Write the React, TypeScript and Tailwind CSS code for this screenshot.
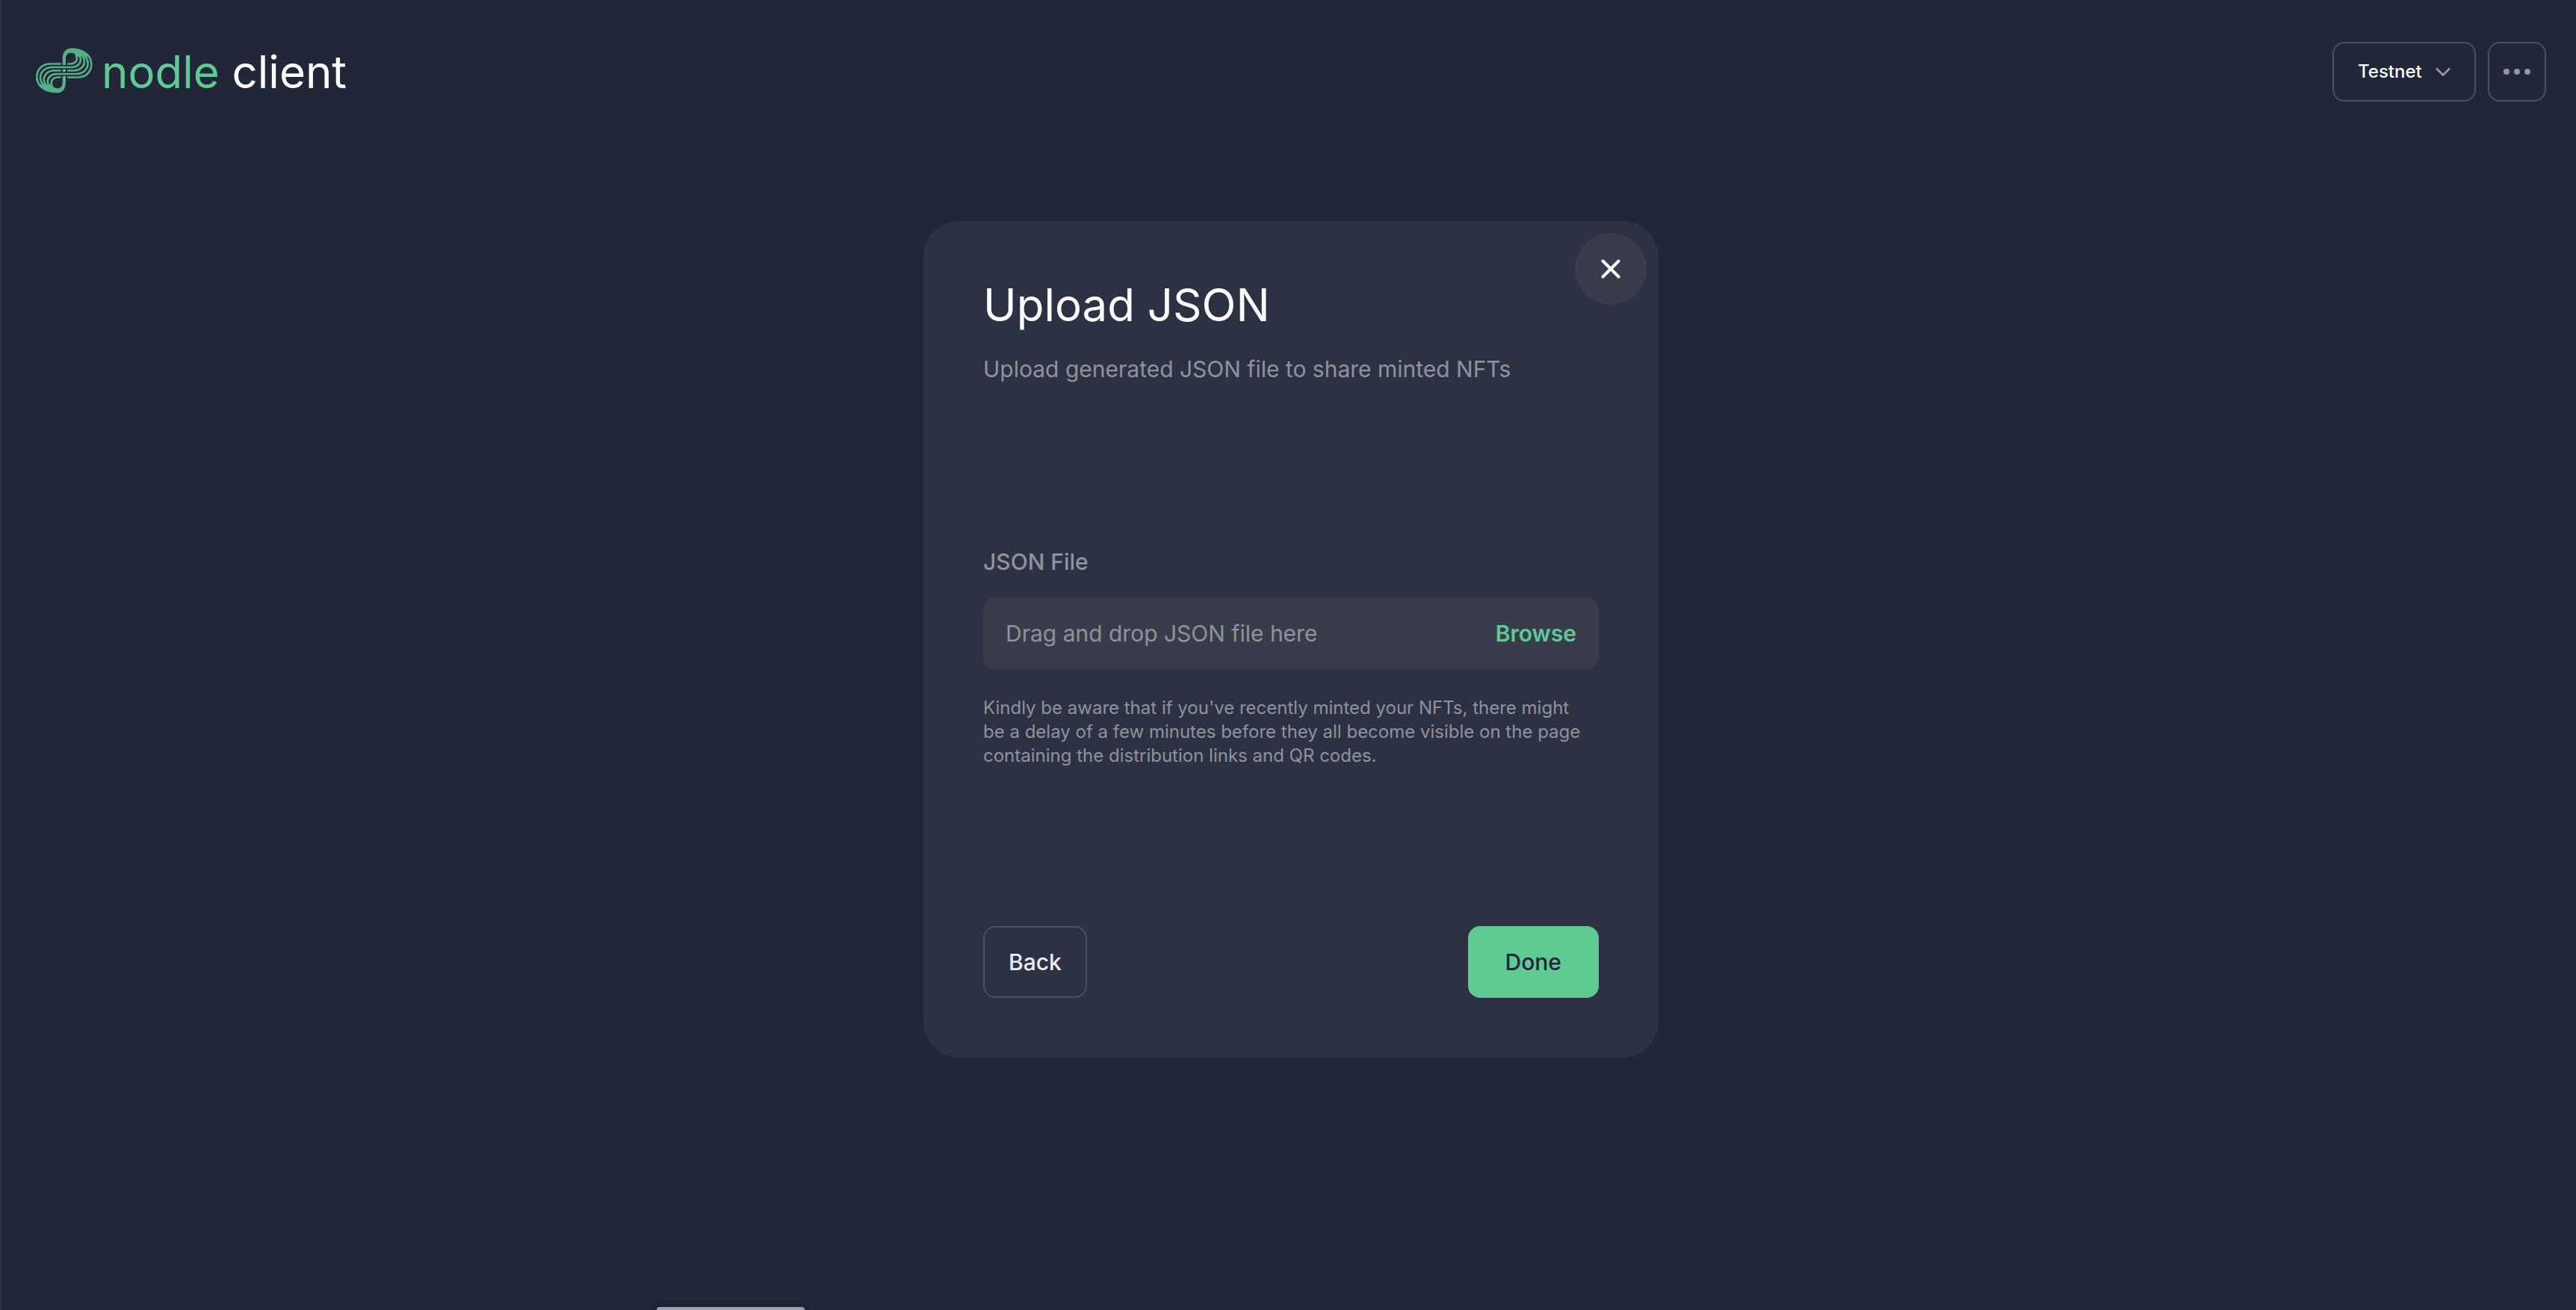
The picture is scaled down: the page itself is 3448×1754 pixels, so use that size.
import { useRef, useState } from "react";

function NodleMark() {
  return (
    <svg viewBox="24 40 228 182" className="mb-1 h-[61px] w-[76px] text-[#56b087]" aria-hidden="true">
      <defs>
        <g id="lobe">
          <path
            fill="currentColor"
            d="M131 109V84C131 56 145 41 168 41C216 41 251 68 251 104L243 104C242 92 239 82 232 75L216 77L206 73L196 74L186 74C183 66 176 60 165 60C151 60 144 70 144 84V109Z"
          />
          <g fill="none" stroke="currentColor" strokeWidth="8">
            <path d="M150 104H164C179 104 189 94 189 82C189 76 187 72 184 68" />
            <path d="M137 117.5H168C188 117.5 204 104 204 86C204 78 200 72 192 66" />
            <path d="M150 131H178C202 131 219 114 219 94C219 82 212 72 200 62" />
            <path d="M137 144.5H184C214 144.5 233 126 233 102C233 86 224 72 208 60" />
            <path d="M150 158H192C226 158 247 136 247 104" />
          </g>
        </g>
      </defs>
      <use href="#lobe" />
      <use href="#lobe" transform="rotate(180 137.5 131)" />
      <rect x="131" y="126" width="13" height="10" fill="currentColor" />
    </svg>
  );
}

function Header() {
  return (
    <header className="flex items-center justify-between">
      <a href="#home" className="flex items-center gap-3 text-[60px] leading-none text-white">
        <NodleMark />
        <span>
          <span className="text-[#5fca94]">nodle</span> client
        </span>
      </a>
      <div className="flex gap-4">
        <div className="relative flex items-center">
          <select
            aria-label="Network"
            className="h-20 appearance-none rounded-2xl border-2 border-[#4b505e] bg-transparent pr-[70px] pl-8 text-2xl font-medium text-white"
          >
            <option>Testnet</option>
          </select>
          <svg viewBox="0 0 20 12" className="pointer-events-none absolute right-[34px] h-3 w-5" fill="none" aria-hidden="true">
            <path d="M1 1.5L10 10.5L19 1.5" stroke="#9d9ea4" strokeWidth="2.5" />
          </svg>
        </div>
        <button
          type="button"
          aria-label="More options"
          className="flex h-20 w-[78px] items-center justify-center gap-1.5 rounded-2xl border-2 border-[#4b505e]"
        >
          <span className="size-2 rounded-full bg-[#9496a0]" />
          <span className="size-2 rounded-full bg-[#9496a0]" />
          <span className="size-2 rounded-full bg-[#9496a0]" />
        </button>
      </div>
    </header>
  );
}

function UploadDialog() {
  const fileInput = useRef<HTMLInputElement>(null);
  const [fileName, setFileName] = useState("");

  return (
    <section
      role="dialog"
      aria-labelledby="dialog-title"
      className="relative w-full max-w-[984px] rounded-[48px] bg-[#2c3144] p-20 text-[30px] leading-10 text-[#90939c]"
    >
      <button
        type="button"
        aria-label="Close"
        className="absolute top-4 right-4 flex size-24 items-center justify-center rounded-full bg-[#383c4b]"
      >
        <svg viewBox="0 0 26 26" className="size-[26px]" aria-hidden="true">
          <path d="M2.5 2.5L23.5 23.5M23.5 2.5L2.5 23.5" stroke="#fff" strokeWidth="4" strokeLinecap="round" />
        </svg>
      </button>

      <h1 id="dialog-title" className="text-[60px] leading-16 text-white">
        Upload JSON
      </h1>
      <p className="mt-[34px]">Upload generated JSON file to share minted NFTs</p>

      <div className="mt-[218px]">
        <label htmlFor="json-file" className="font-medium">
          JSON File
        </label>
        <div className="mt-7 flex h-24 items-center justify-between rounded-2xl bg-[#383c4b] px-[30px]">
          <span>{fileName || "Drag and drop JSON file here"}</span>
          <input
            ref={fileInput}
            id="json-file"
            type="file"
            accept=".json"
            className="sr-only"
            onChange={(e) => setFileName(e.target.files?.[0]?.name ?? "")}
          />
          <button type="button" className="font-semibold text-[#5fca94]" onClick={() => fileInput.current?.click()}>
            Browse
          </button>
        </div>
      </div>
      <p className="mt-9 pr-3 text-2xl leading-8">
        Kindly be aware that if you've recently minted your NFTs, there might be a delay of a few minutes before they
        all become visible on the page containing the distribution links and QR codes.
      </p>

      <div className="mt-[212px] flex justify-between font-medium">
        <button type="button" className="h-24 rounded-2xl border-2 border-[#4b505e] px-8 text-[#ecedf0]">
          Back
        </button>
        <button type="button" className="h-24 rounded-2xl bg-[#5fca94] px-[50px] text-[#212638]">
          Done
        </button>
      </div>
    </section>
  );
}

export default function App() {
  return (
    <div className="relative min-h-screen overflow-hidden border-l border-[#363b4b] bg-[#212638] pt-14 pr-10 pl-[47px] font-['Inter','Liberation_Sans',sans-serif]">
      <Header />
      <main className="mt-40 flex justify-center">
        <UploadDialog />
      </main>
      <div className="absolute bottom-0 left-[878px] h-1 w-[198px] rounded-t bg-[#9a9fad] shadow-[0_0_8px_rgba(0,0,0,0.4)]" />
    </div>
  );
}
